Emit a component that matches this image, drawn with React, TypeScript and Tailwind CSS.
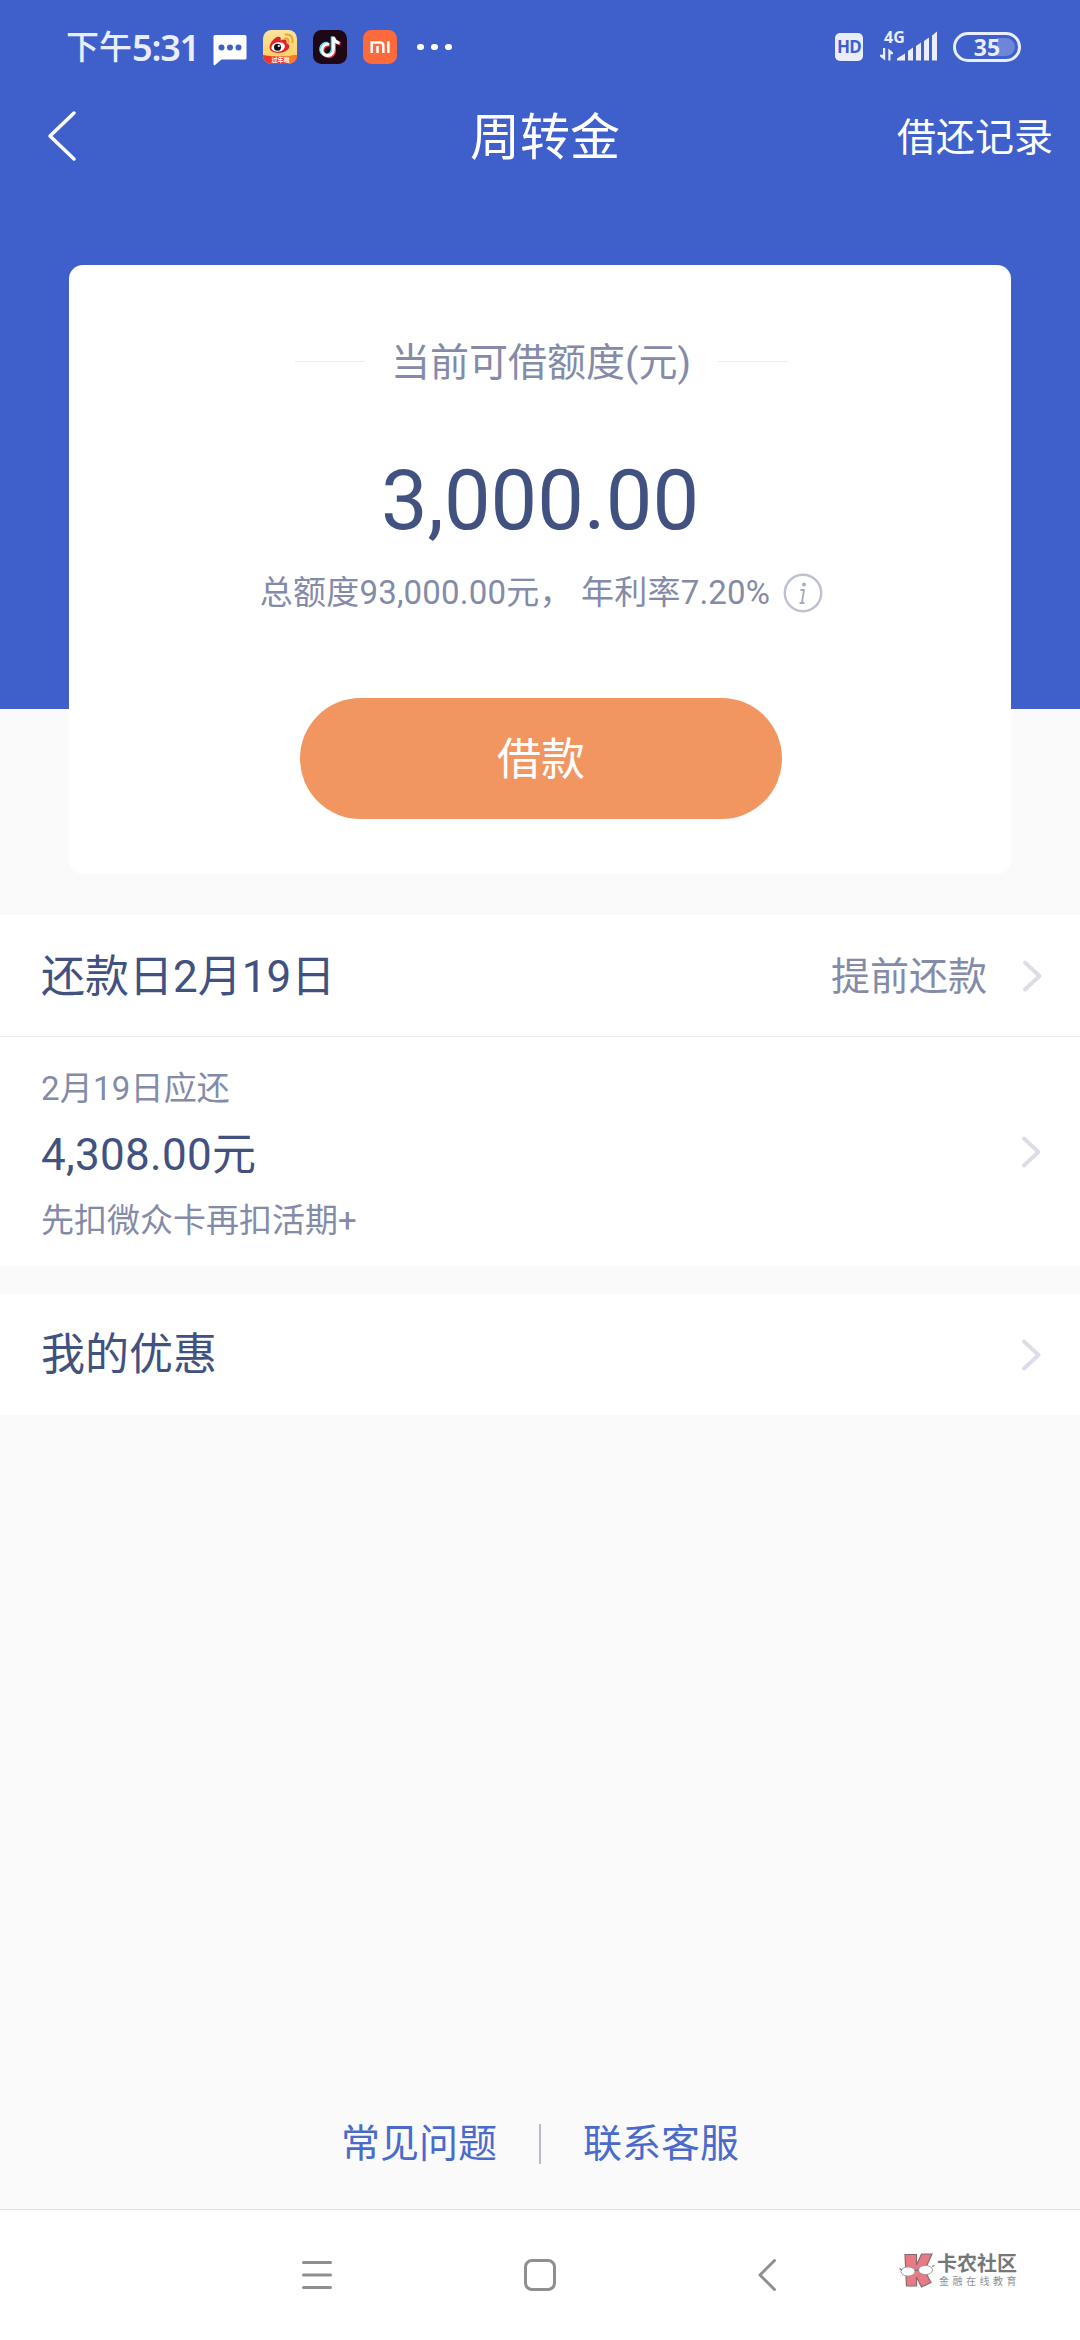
import React from "react";

const ChevronRight = ({ className = "" }: { className?: string }) => (
  <svg className={`w-[20px] h-[34px] ${className}`} viewBox="0 0 20 34" fill="none">
    <path
      d="M3 3.500L17.500 17L3 30.500"
      stroke="#dcdde8"
      strokeWidth="3.900"
      strokeLinecap="round"
      strokeLinejoin="round"
    />
  </svg>
);

const StatusBar = () => (
  <div className="h-[94px] shrink-0 flex items-center justify-between pl-[66px] pr-[59px]">
    {/* Time and notification icons */}
    <div className="flex items-center">
      <div className="w-[147px] flex items-center pt-[2px] text-[#e9edfd] whitespace-nowrap">
        <span className="text-[33px] leading-[40px] font-medium">下午</span>
        <span className="font-['Noto_Sans'] text-[36px] leading-[40px] font-semibold tracking-[-1.2px]">
          5:31
        </span>
      </div>
      <svg className="w-[34px] h-[34px] mt-[5px]" viewBox="0 0 34 34">
        <path
          d="M2 2H32Q33.500 2 33.500 3.500V25Q33.500 26.500 32 26.500H8.500L1.500 32.500Q.5 32 .5 31V3.500Q.5 2 2 2Z"
          fill="#fff"
        />
        <circle cx="8.500" cy="14.500" r="3" fill="#3f60cb" />
        <circle cx="17" cy="14.500" r="3" fill="#3f60cb" />
        <circle cx="25.500" cy="14.500" r="3" fill="#3f60cb" />
      </svg>
      <svg className="w-[34px] h-[34px] ml-[16px]" viewBox="0 0 34 34">
        <defs>
          <clipPath id="weibo">
            <rect width="34" height="34" rx="8.500" />
          </clipPath>
          <linearGradient id="weiboBg" x1="0" y1="0" x2="0" y2="1">
            <stop offset="0" stopColor="#fbe3a0" />
            <stop offset="1" stopColor="#fccf52" />
          </linearGradient>
        </defs>
        <g clipPath="url(#weibo)">
          <rect width="34" height="34" fill="url(#weiboBg)" />
          <path d="M0 25Q17 28 34 25V34H0Z" fill="#f0362b" />
          <path d="M20 26.700L34 25V34H26Z" fill="#fb7a2b" />
          <path
            d="M14 7C17 6 18.500 8 17.500 10.500C22 8.500 24.500 10 23.500 13C28 14.500 27 19.500 22 21.500C15 24.500 6.500 22.500 6.500 17.500C6.500 13.500 10.500 8.500 14 7Z"
            fill="#e0212b"
          />
          <ellipse cx="15.200" cy="17" rx="6.800" ry="4.700" fill="#fff" transform="rotate(-10 15 17)" />
          <circle cx="14.500" cy="17.300" r="3.500" fill="#111" />
          <circle cx="15.800" cy="16" r="1.100" fill="#fff" />
          <path d="M22 8.500Q26 8 25.500 12.500M22.500 4.500Q30.500 4 29.500 12.500" stroke="#e9a532" strokeWidth="1.900" fill="none" strokeLinecap="round" />
        </g>
        <text x="17.500" y="32.300" fontSize="6" fontWeight="700" fill="#fff" textAnchor="middle">
          过年啦
        </text>
      </svg>
      <svg className="w-[34px] h-[34px] ml-[16px]" viewBox="0 0 34 34">
        <rect width="34" height="34" rx="8.500" fill="#1f0716" />
        <g fill="none" strokeWidth="3.200">
          <path d="M16 14.200A5.800 5.800 0 1 0 20.500 20V7C21 10.500 23.500 12.500 26.500 12.800" stroke="#f2405d" transform="translate(.9 .9)" />
          <path d="M16 14.200A5.800 5.800 0 1 0 20.500 20V7C21 10.500 23.500 12.500 26.500 12.800" stroke="#4ce5e5" transform="translate(-1.200 -.6)" />
          <path d="M16 14.200A5.800 5.800 0 1 0 20.500 20V7C21 10.500 23.500 12.500 26.500 12.800" stroke="#fff" strokeWidth="2.800" />
        </g>
      </svg>
      <svg className="w-[34px] h-[34px] ml-[16px]" viewBox="0 0 34 34">
        <rect width="34" height="34" rx="8.500" fill="#ff6a3d" />
        <path
          d="M8.700 23V12.500H17Q20.300 12.500 20.300 15.800V23M14.500 16V23M25.300 11.200V23"
          stroke="#fff"
          strokeWidth="2.500"
          fill="none"
        />
      </svg>
      <div className="flex gap-[7.400px] ml-[20px]">
        <span className="w-[6.600px] h-[6.600px] rounded-full bg-white" />
        <span className="w-[6.600px] h-[6.600px] rounded-full bg-white" />
        <span className="w-[6.600px] h-[6.600px] rounded-full bg-white" />
      </div>
    </div>

    {/* Signal and battery */}
    <div className="flex items-center text-[#e9edfd]">
      <div className="w-[28px] h-[28px] rounded-[5px] bg-[#e9edfd] flex items-center justify-center text-[#3f60cb] font-['Noto_Sans'] text-[17px] leading-[28px] font-bold tracking-[-0.6px]">
        HD
      </div>
      <svg className="w-[60px] h-[44px] ml-[16px] -mt-[2px]" viewBox="0 -5 60 44" fill="#e9edfd">
        <text x="5" y="13.500" fontSize="16" fontWeight="700" fontFamily="Noto Sans">
          4G
        </text>
        <path d="M4 19H6.200V31.500L1 27.500V25.800H4ZM9.300 31.500V19.500L14 23.500V25.300H11.500V31.500Z" />
        <path d="M18 31.500V29.500L26 24.500V31.500ZM29 31.500V22L34 18.500V31.500ZM37 31.500V17L42 13.500V31.500ZM45 31.500V12L50 8.500V31.500ZM53 31.500V6.500L58 2.500V31.500Z" />
      </svg>
      <div className="relative w-[68px] h-[30px] ml-[14px] rounded-full border-[3px] border-[#e9edfd] flex items-center justify-center">
        <span className="absolute right-[3px] top-[3px] w-[18px] h-[18px] rounded-r-full bg-[#6d86d8]" />
        <span className="relative font-['Noto_Sans'] text-[23px] leading-[24px] font-bold">35</span>
      </div>
    </div>
  </div>
);

const NavBar = () => (
  <div className="h-[84px] shrink-0 grid grid-cols-[200px_1fr_200px] items-center text-white">
    <svg className="w-[32px] h-[52px] ml-[46px]" viewBox="0 0 32 52" fill="none">
      <path d="M28 3L4 26L28 49" stroke="#fff" strokeWidth="3.500" strokeLinecap="round" strokeLinejoin="round" />
    </svg>
    <h1 className="text-[50px] leading-[60px] text-center pl-[10px] pt-[4px]">周转金</h1>
    <span className="text-[39px] leading-[50px] text-right pr-[27px] pt-[4px] whitespace-nowrap">借还记录</span>
  </div>
);

const QuotaCard = () => (
  <div className="w-[942px] h-[609px] shrink-0 mx-auto mt-[87px] bg-white rounded-[14px] flex flex-col items-center">
    <div className="flex items-center mt-[72px] ml-[2px]">
      <span className="w-[70px] h-px bg-[#ececec] -mt-[4px]" />
      <span className="w-[353px] text-center text-[39px] leading-[52px] text-[#838ba8]">
        当前可借额度(元)
      </span>
      <span className="w-[70px] h-px bg-[#ececec] -mt-[4px]" />
    </div>
    <div className="mt-[62px] text-[83px] leading-[100px] text-[#415180]">3,000.00</div>
    <div className="flex items-center mt-[17px] ml-[3px] text-[33px] leading-[48px] text-[#838ba8]">
      <span className="whitespace-pre tracking-[0.2px] pt-px">总额度93,000.00元， 年利率7.20%</span>
      <svg className="w-[40px] h-[40px] ml-[13px]" viewBox="0 0 40 40" fill="none">
        <circle cx="20" cy="20" r="18.200" stroke="#bdc1d0" strokeWidth="2.400" />
        <circle cx="21" cy="11.500" r="1.900" fill="#a5abc0" />
        <path d="M17.500 17H21L19 29.500M16.500 30H21.500" stroke="#a5abc0" strokeWidth="1.800" />
      </svg>
    </div>
    <button className="w-[482px] h-[121px] mt-[81px] ml-[2px] pt-[3px] rounded-full bg-[#f19661] text-white text-[44px] leading-[60px]">
      借款
    </button>
  </div>
);

const App = () => {
  return (
    <div className="w-[1080px] h-[2340px] overflow-hidden flex flex-col bg-[#fafafa] font-['Roboto','Noto_Sans_CJK_SC',sans-serif]">
      {/* Header, the card hangs below the blue area */}
      <header className="h-[709px] shrink-0 bg-[#3f60cb] flex flex-col">
        <StatusBar />
        <NavBar />
        <QuotaCard />
      </header>

      {/* Repayment */}
      <section className="mt-[206px] bg-white">
        <div className="h-[122px] flex items-center justify-between pl-[41px] pr-[38px] border-b border-[#ebebeb]">
          <span className="pt-[3px] text-[44px] leading-[60px] text-[#415180]">还款日2月19日</span>
          <span className="flex items-center text-[39px] leading-[60px] text-[#838ba8]">
            <span className="pt-[3px]">提前还款</span>
            <ChevronRight className="ml-[35px]" />
          </span>
        </div>
        <div className="h-[229px] flex items-center justify-between pl-[41px] pr-[39px]">
          <div className="flex flex-col pt-[6px] text-[33px] leading-[48px] text-[#838ba8]">
            <span className="tracking-[0.2px]">2月19日应还</span>
            <span className="my-[6px] text-[44px] leading-[72px] tracking-[0.3px] text-[#415180]">4,308.00元</span>
            <span>先扣微众卡再扣活期+</span>
          </div>
          <ChevronRight />
        </div>
      </section>

      {/* Coupons */}
      <section className="mt-[28px] h-[121px] bg-white flex items-center justify-between pl-[41px] pr-[39px]">
        <span className="text-[44px] leading-[60px] text-[#415180]">我的优惠</span>
        <ChevronRight />
      </section>

      {/* Footer links */}
      <footer className="mt-auto mb-[35px] flex items-center justify-center text-[39px] leading-[60px] text-[#4a6bcb]">
        <span className="pt-px">常见问题</span>
        <span className="w-[2px] h-[40px] mx-[42px] bg-[#b8bac6]" />
        <span className="pt-px">联系客服</span>
      </footer>

      {/* System navigation */}
      <nav className="h-[131px] shrink-0 bg-white border-t border-[#e0e0e0] flex items-center pl-[301px]">
        <svg className="w-[32px] h-[36px]" viewBox="0 0 32 36" fill="none">
          <path d="M2.500 5.500H29.500M2.500 18H29.500M2.500 30.500H29.500" stroke="#8f8f8f" strokeWidth="3" strokeLinecap="round" />
        </svg>
        <svg className="w-[34px] h-[36px] ml-[190px]" viewBox="0 0 34 36" fill="none">
          <rect x="2.500" y="3.500" width="29" height="29" rx="6.500" stroke="#8f8f8f" strokeWidth="3" />
        </svg>
        <svg className="w-[22px] h-[36px] ml-[199px]" viewBox="0 0 22 36" fill="none">
          <path d="M18.500 3.500L4 18L18.500 32.500" stroke="#8f8f8f" strokeWidth="3" strokeLinecap="round" strokeLinejoin="round" />
        </svg>
        <div className="flex items-center ml-[121px] -mt-[9px]">
          <svg className="w-[36px] h-[36px]" viewBox="0 0 36 36">
            <path
              d="M6 1.500H17.500V12L22.500 1H33L25.500 17.500L32 29.500L22.500 34L17.500 24V33H7.500Z"
              fill="#e87a84"
              stroke="#8a6a70"
              strokeWidth="1.200"
            />
            <ellipse cx="9" cy="18.500" rx="7" ry="4.600" fill="#fff" stroke="#999" strokeWidth="1" />
            <ellipse cx="26.500" cy="17" rx="7" ry="4.600" fill="#fff" stroke="#999" strokeWidth="1" />
            <path d="M16 17.500L19.500 17M.5 15.500L3 17M33 13.500L35.500 12.500" stroke="#777" strokeWidth="1.300" />
          </svg>
          <div className="flex flex-col ml-[2px] whitespace-nowrap">
            <span className="text-[20px] leading-[22px] font-bold text-[#777]">卡农社区</span>
            <span className="ml-[2px] text-[10px] leading-[13px] tracking-[3.500px] text-[#8f8f8f]">
              金融在线教育
            </span>
          </div>
        </div>
      </nav>
    </div>
  );
};

export default App;
